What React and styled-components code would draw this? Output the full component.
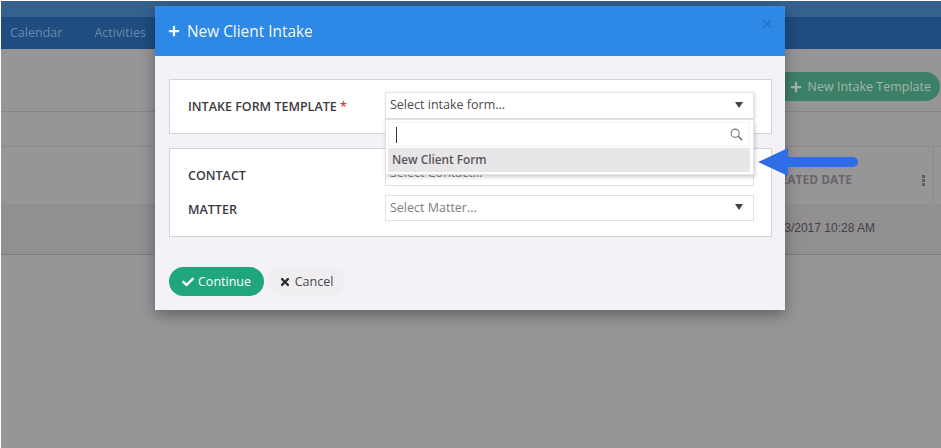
import React from 'react';
import styled, { createGlobalStyle } from 'styled-components';
import { FaPlus, FaCheck, FaTimes } from 'react-icons/fa';

const GlobalStyle = createGlobalStyle`
  html, body {
    margin: 0;
    padding: 0;
    background: #fff;
  }
  body {
    font-family: 'Open Sans', 'Noto Sans', sans-serif;
  }
`;

const Caret = () => <CaretMark />;

const SearchIcon = () => (
  <svg width="13" height="13" viewBox="0 0 14 14" fill="none" stroke="#6f6f6f">
    <circle cx="5.6" cy="5.6" r="4.4" strokeWidth="1.1" />
    <path d="M8.9 8.9 L13 13" strokeWidth="1.7" />
  </svg>
);

const App = () => (
  <>
    <GlobalStyle />
    <Page>
      <TopStrip />
      <Nav>
        <NavItem>Calendar</NavItem>
        <NavItem>Activities</NavItem>
      </Nav>
      <Toolbar>
        <GreenPill><FaPlus size={12} />New Intake Template</GreenPill>
      </Toolbar>
      <FilterBar />
      <TableHead>
        <HeadCell>CREATED DATE</HeadCell>
        <Kebab><i /><i /><i /></Kebab>
      </TableHead>
      <TableRow>
        <RowCell>10/13/2017 10:28 AM</RowCell>
      </TableRow>
      <Rest />

      <Modal>
        <ModalHeader>
          <FaPlus size={12} />
          <ModalTitle>New Client Intake</ModalTitle>
          <CloseMark>×</CloseMark>
        </ModalHeader>
        <ModalBody>
          <Section $top>
            <FieldRow $tall>
              <FieldLabel $nudge={2}>INTAKE FORM TEMPLATE <Required>*</Required></FieldLabel>
              <SelectWrap>
                <SelectBox $strong>Select intake form...<Caret /></SelectBox>
                <Dropdown>
                  <SearchRow><TextCursor /><SearchIcon /></SearchRow>
                  <Option>New Client Form</Option>
                </Dropdown>
              </SelectWrap>
            </FieldRow>
          </Section>
          <Section>
            <FieldRow>
              <FieldLabel $nudge={4}>CONTACT</FieldLabel>
              <SelectBox>Select Contact...<Caret /></SelectBox>
            </FieldRow>
            <FieldRow>
              <FieldLabel $nudge={3}>MATTER</FieldLabel>
              <SelectBox>Select Matter...<Caret /></SelectBox>
            </FieldRow>
          </Section>
          <Buttons>
            <ContinueButton><FaCheck size={12} />Continue</ContinueButton>
            <CancelButton><FaTimes size={12} />Cancel</CancelButton>
          </Buttons>
        </ModalBody>
      </Modal>

      <Arrow width="101" height="30" viewBox="0 0 101 30">
        <path d="M0 15 L30 1 L30 10 L95 10 A5 5 0 0 1 95 20 L30 20 L30 29 Z" fill="#2f6de6" />
      </Arrow>
    </Page>
  </>
);

export default App;

const Page = styled.div`
  position: relative;
  width: 940px;
  height: 447px;
  margin: 1px 0 0 1px;
  overflow: hidden;
  background: #989598;
  display: flex;
  flex-direction: column;
`;

const TopStrip = styled.div`
  height: 16px;
  background: #35618f;
`;

const Nav = styled.div`
  height: 32px;
  padding: 0 0 2px 9px;
  box-sizing: border-box;
  background: #204c7f;
  display: flex;
  align-items: center;
  gap: 32px;
`;

const NavItem = styled.span`
  font-size: 12.5px;
  color: #678aad;
`;

const Toolbar = styled.div`
  height: 63px;
  box-sizing: border-box;
  border-bottom: 1px solid #888589;
  display: flex;
  justify-content: flex-end;
  padding: 23px 1px 0 0;
`;

const GreenPill = styled.div`
  height: 29px;
  width: 170px;
  box-sizing: border-box;
  border-radius: 15px;
  background: #3d8068;
  color: #a3b5ad;
  font-size: 12.5px;
  display: flex;
  align-items: center;
  justify-content: flex-end;
  gap: 6px;
  padding-right: 9px;

  svg {
    color: #a7b3ae;
  }
`;

const FilterBar = styled.div`
  height: 35px;
  box-sizing: border-box;
  border-bottom: 1px solid #8e8b8e;
`;

const TableHead = styled.div`
  height: 57px;
  margin-right: 7px;
  border-right: 1px solid #8e8b8e;
  display: flex;
  align-items: center;
  justify-content: flex-end;
  padding: 9px 8px 0 0;
  box-sizing: border-box;
`;

const HeadCell = styled.span`
  font-size: 12px;
  font-weight: 700;
  color: #68666a;
  margin: 0 70px 2px 0;
`;

const Kebab = styled.span`
  display: flex;
  flex-direction: column;
  gap: 1px;

  i {
    width: 3px;
    height: 3px;
    background: #5f5d60;
  }
`;

const TableRow = styled.div`
  height: 51px;
  box-sizing: border-box;
  background: #928f92;
  border-bottom: 1px solid #7e7b7e;
  display: flex;
  align-items: center;
  justify-content: flex-end;
  padding: 0 66px 2px 0;
`;

const RowCell = styled.span`
  font-family: 'Liberation Sans', Arial, sans-serif;
  font-size: 12px;
  color: #444245;
`;

const Rest = styled.div`
  flex: 1;
`;

const Modal = styled.div`
  position: absolute;
  top: 5px;
  left: 154px;
  width: 630px;
  height: 304px;
  background: #f4f2f7;
  border-radius: 3px 3px 0 0;
  box-shadow: 0 5px 15px rgba(0, 0, 0, 0.35);
  display: flex;
  flex-direction: column;
`;

const ModalHeader = styled.div`
  height: 50px;
  background: #2d88e6;
  border-radius: 3px 3px 0 0;
  display: flex;
  align-items: center;
  padding: 0 12px 0 13px;
  color: #f2f7fd;
`;

const ModalTitle = styled.span`
  margin-left: 7px;
  font-size: 15.4px;
  flex: 1;
`;

const CloseMark = styled.span`
  font-size: 20px;
  line-height: 20px;
  color: #2572c2;
  margin-top: -14px;
`;

const ModalBody = styled.div`
  padding: 23px 13px 0 14px;
  display: flex;
  flex-direction: column;
`;

const Section = styled.div`
  box-sizing: border-box;
  height: ${props => (props.$top ? '55px' : '89px')};
  margin-bottom: 14px;
  padding: ${props => (props.$top ? '12px 17px 0 18px' : '11px 17px 0 18px')};
  background: #fff;
  border: 1px solid #d5d3d8;
  display: flex;
  flex-direction: column;
  gap: 9px;
`;

const FieldRow = styled.div`
  display: flex;
  height: ${props => (props.$tall ? '27px' : '26px')};
  align-items: center;
`;

const FieldLabel = styled.label`
  width: 197px;
  flex: none;
  padding-top: ${props => props.$nudge}px;
  font-size: 12.5px;
  font-weight: 600;
  color: #3c3a3e;
`;

const Required = styled.span`
  color: #e8333a;
`;

const SelectWrap = styled.div`
  position: relative;
  flex: 1;
`;

const SelectBox = styled.div`
  flex: 1;
  box-sizing: border-box;
  height: ${props => (props.$strong ? '27px' : '26px')};
  padding: 0 10px 2px 4px;
  background: #fff;
  border: 1px solid #e3e1e6;
  box-shadow: ${props => (props.$strong ? '1px 1px 3px rgba(0, 0, 0, 0.15)' : 'none')};
  font-size: 12.5px;
  color: ${props => (props.$strong ? '#4c4a4e' : '#807e82')};
  display: flex;
  align-items: center;
  justify-content: space-between;
`;

const CaretMark = styled.i`
  width: 0;
  height: 0;
  border-left: 4px solid transparent;
  border-right: 4px solid transparent;
  border-top: 6px solid #444246;
`;

const Dropdown = styled.div`
  position: absolute;
  top: 27px;
  left: 0;
  right: 0;
  z-index: 2;
  box-sizing: border-box;
  height: 56px;
  padding: 2px 3px 2px 2px;
  background: #fff;
  border: 1px solid #e3e1e6;
  box-shadow: 1px 2px 4px rgba(0, 0, 0, 0.2);
`;

const SearchRow = styled.div`
  height: 25px;
  box-sizing: border-box;
  padding: 0 6px 0 7px;
  border: 1px solid #f5f3f7;
  display: flex;
  align-items: center;
  justify-content: space-between;
`;

const TextCursor = styled.i`
  width: 1px;
  height: 16px;
  background: #333;
`;

const Option = styled.div`
  height: 24px;
  margin-top: 1px;
  padding-left: 4px;
  background: #e8e6e9;
  font-size: 11.8px;
  font-weight: 600;
  line-height: 23px;
  color: #5a585c;
`;

const Buttons = styled.div`
  margin-top: 16px;
  display: flex;
  gap: 3px;
`;

const ContinueButton = styled.button`
  height: 29px;
  width: 95px;
  border: 0;
  border-radius: 15px;
  background: #1fa67f;
  color: #fff;
  font-family: inherit;
  font-size: 12.5px;
  display: flex;
  align-items: center;
  justify-content: center;
  gap: 4px;
`;

const CancelButton = styled.button`
  height: 29px;
  width: 78px;
  border: 0;
  border-radius: 15px;
  background: #f1eef2;
  color: #4a484c;
  font-family: inherit;
  font-size: 12.5px;
  display: flex;
  align-items: center;
  justify-content: center;
  gap: 4px;

  svg {
    color: #2c2a2e;
  }
`;

const Arrow = styled.svg`
  position: absolute;
  top: 146px;
  left: 757px;
`;
